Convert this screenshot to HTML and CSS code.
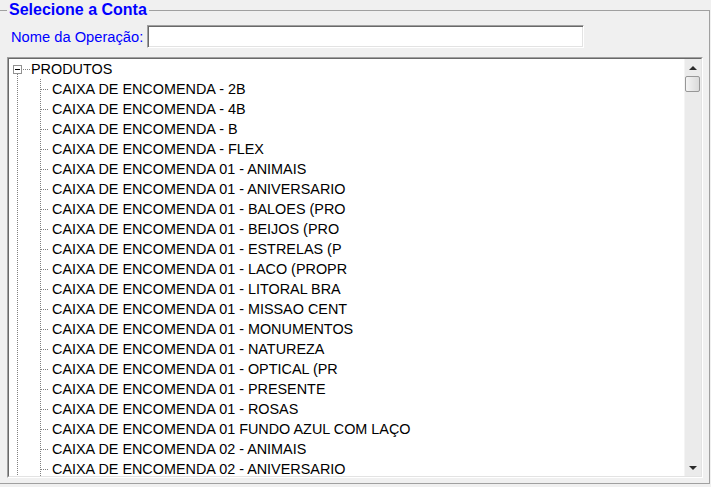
FILE: index.html
```html
<!DOCTYPE html>
<html lang="pt-BR">
<head>
    <meta charset="UTF-8">
    <title>Selecione a Conta</title>
    <link rel="stylesheet" href="styles.css">
</head>
<body>

    <!-- Grupo: seleção da conta -->
    <fieldset class="group">
        <legend class="group-title">Selecione a Conta</legend>

        <div class="op-row">
            <label class="op-label" for="op-name">Nome da Operação:</label>
            <input class="op-input" id="op-name" type="text">
        </div>

        <!-- Árvore de contas -->
        <div class="tree">
            <div class="tree-body">
                <ul class="tree-list">
                    <li class="tree-root">
                        <div class="root-row">
                            <span class="expander"></span>
                            <span class="hline"></span>
                            <span class="node-text">PRODUTOS</span>
                        </div>
                        <ul class="children">
                            <li class="child"><span class="conn"></span>CAIXA DE ENCOMENDA - 2B</li>
                            <li class="child"><span class="conn"></span>CAIXA DE ENCOMENDA - 4B</li>
                            <li class="child"><span class="conn"></span>CAIXA DE ENCOMENDA - B</li>
                            <li class="child"><span class="conn"></span>CAIXA DE ENCOMENDA - FLEX</li>
                            <li class="child"><span class="conn"></span>CAIXA DE ENCOMENDA 01 - ANIMAIS</li>
                            <li class="child"><span class="conn"></span>CAIXA DE ENCOMENDA 01 - ANIVERSARIO</li>
                            <li class="child"><span class="conn"></span>CAIXA DE ENCOMENDA 01 - BALOES (PRO</li>
                            <li class="child"><span class="conn"></span>CAIXA DE ENCOMENDA 01 - BEIJOS (PRO</li>
                            <li class="child"><span class="conn"></span>CAIXA DE ENCOMENDA 01 - ESTRELAS (P</li>
                            <li class="child"><span class="conn"></span>CAIXA DE ENCOMENDA 01 - LACO (PROPR</li>
                            <li class="child"><span class="conn"></span>CAIXA DE ENCOMENDA 01 - LITORAL BRA</li>
                            <li class="child"><span class="conn"></span>CAIXA DE ENCOMENDA 01 - MISSAO CENT</li>
                            <li class="child"><span class="conn"></span>CAIXA DE ENCOMENDA 01 - MONUMENTOS</li>
                            <li class="child"><span class="conn"></span>CAIXA DE ENCOMENDA 01 - NATUREZA</li>
                            <li class="child"><span class="conn"></span>CAIXA DE ENCOMENDA 01 - OPTICAL (PR</li>
                            <li class="child"><span class="conn"></span>CAIXA DE ENCOMENDA 01 - PRESENTE</li>
                            <li class="child"><span class="conn"></span>CAIXA DE ENCOMENDA 01 - ROSAS</li>
                            <li class="child"><span class="conn"></span>CAIXA DE ENCOMENDA 01 FUNDO AZUL COM LAÇO</li>
                            <li class="child"><span class="conn"></span>CAIXA DE ENCOMENDA 02 - ANIMAIS</li>
                            <li class="child"><span class="conn"></span>CAIXA DE ENCOMENDA 02 - ANIVERSARIO</li>
                        </ul>
                    </li>
                </ul>

                <!-- Barra de rolagem -->
                <div class="vscroll">
                    <div class="sb-btn"><span class="arrow-up"></span></div>
                    <div class="sb-track"><div class="sb-thumb"></div></div>
                    <div class="sb-btn"><span class="arrow-down"></span></div>
                </div>
            </div>
        </div>
    </fieldset>

</body>
</html>
```

FILE: styles.css
```css
* {
    box-sizing: border-box;
    margin: 0;
    padding: 0;
}

html, body {
    height: 100%;
}

body {
    background-color: #f0f0f0;
    font-family: 'Liberation Sans', Arial, sans-serif;
    color: #000;
    overflow: hidden;
}

/* Groupbox */
.group {
    margin: 1px 0 0 -4px;
    width: 714px;
    border: 1px solid #a0a0a0;
    padding: 0 6px 5px 10px;
}

.group-title {
    padding: 0 2px;
    font-size: 16px;
    font-weight: bold;
    line-height: 18px;
    color: #0000ff;
}

/* Linha do nome da operação */
.op-row {
    display: flex;
    align-items: center;
    margin-top: 6px;
}

.op-label {
    flex: 0 0 140px;
    padding-left: 4px;
    font-size: 14.7px;
    color: #0000ff;
}

.op-input {
    width: 437px;
    height: 23px;
    border: 1px solid;
    border-color: #a0a0a0 #ffffff #ffffff #a0a0a0;
    box-shadow: inset 1px 1px #696969, inset -1px -1px #e3e3e3;
    background-color: #fff;
    outline: none;
}

/* Árvore */
.tree {
    margin-top: 9px;
    height: 421px;
    border: 1px solid;
    border-color: #a0a0a0 #ffffff #ffffff #a0a0a0;
}

.tree-body {
    display: flex;
    height: 100%;
    border: 1px solid;
    border-color: #696969 #e3e3e3 #e3e3e3 #696969;
    background-color: #fff;
}

.tree-list {
    flex: 1;
    list-style: none;
    overflow: hidden;
    font-size: 14.4px;
    line-height: 16px;
}

.tree-root {
    background-image: repeating-linear-gradient(to bottom, #808080 0 1px, transparent 1px 2px);
    background-size: 1px 100%;
    background-position: 8px 15px;
    background-repeat: no-repeat;
}

.root-row {
    display: flex;
    align-items: center;
    height: 20px;
    padding-left: 4px;
}

.expander {
    display: flex;
    align-items: center;
    justify-content: center;
    width: 9px;
    height: 9px;
    border: 1px solid #919191;
    background-color: #fff;
}

.expander::after {
    content: "";
    width: 5px;
    height: 1px;
    background-color: #000;
}

.hline,
.conn {
    height: 1px;
    background-image: repeating-linear-gradient(to right, #808080 0 1px, transparent 1px 2px);
}

.hline {
    width: 7px;
    margin: 0 1px 0 1px;
}

.children {
    list-style: none;
    background-image: repeating-linear-gradient(to bottom, #808080 0 1px, transparent 1px 2px);
    background-size: 1px 100%;
    background-position: 31px 0;
    background-repeat: no-repeat;
}

.child {
    display: flex;
    align-items: center;
    height: 20px;
    padding-left: 32px;
    white-space: nowrap;
}

.conn {
    width: 8px;
    margin-right: 3px;
}

/* Barra de rolagem vertical */
.vscroll {
    flex: 0 0 17px;
    display: flex;
    flex-direction: column;
    background-color: #ebebeb;
    border-left: 1px solid #f4f4f4;
}

.sb-btn {
    height: 17px;
    display: flex;
    align-items: center;
    justify-content: center;
}

.arrow-up,
.arrow-down {
    width: 0;
    height: 0;
    border-left: 4px solid transparent;
    border-right: 4px solid transparent;
}

.arrow-up {
    border-bottom: 4px solid #2a2a2a;
}

.arrow-down {
    border-top: 4px solid #2a2a2a;
}

.sb-track {
    flex: 1;
    padding: 0 1px 0 0;
}

.sb-thumb {
    height: 16px;
    border: 1px solid #979797;
    border-radius: 2px;
    background: linear-gradient(to right, #f4f4f4, #dadada);
}
```
